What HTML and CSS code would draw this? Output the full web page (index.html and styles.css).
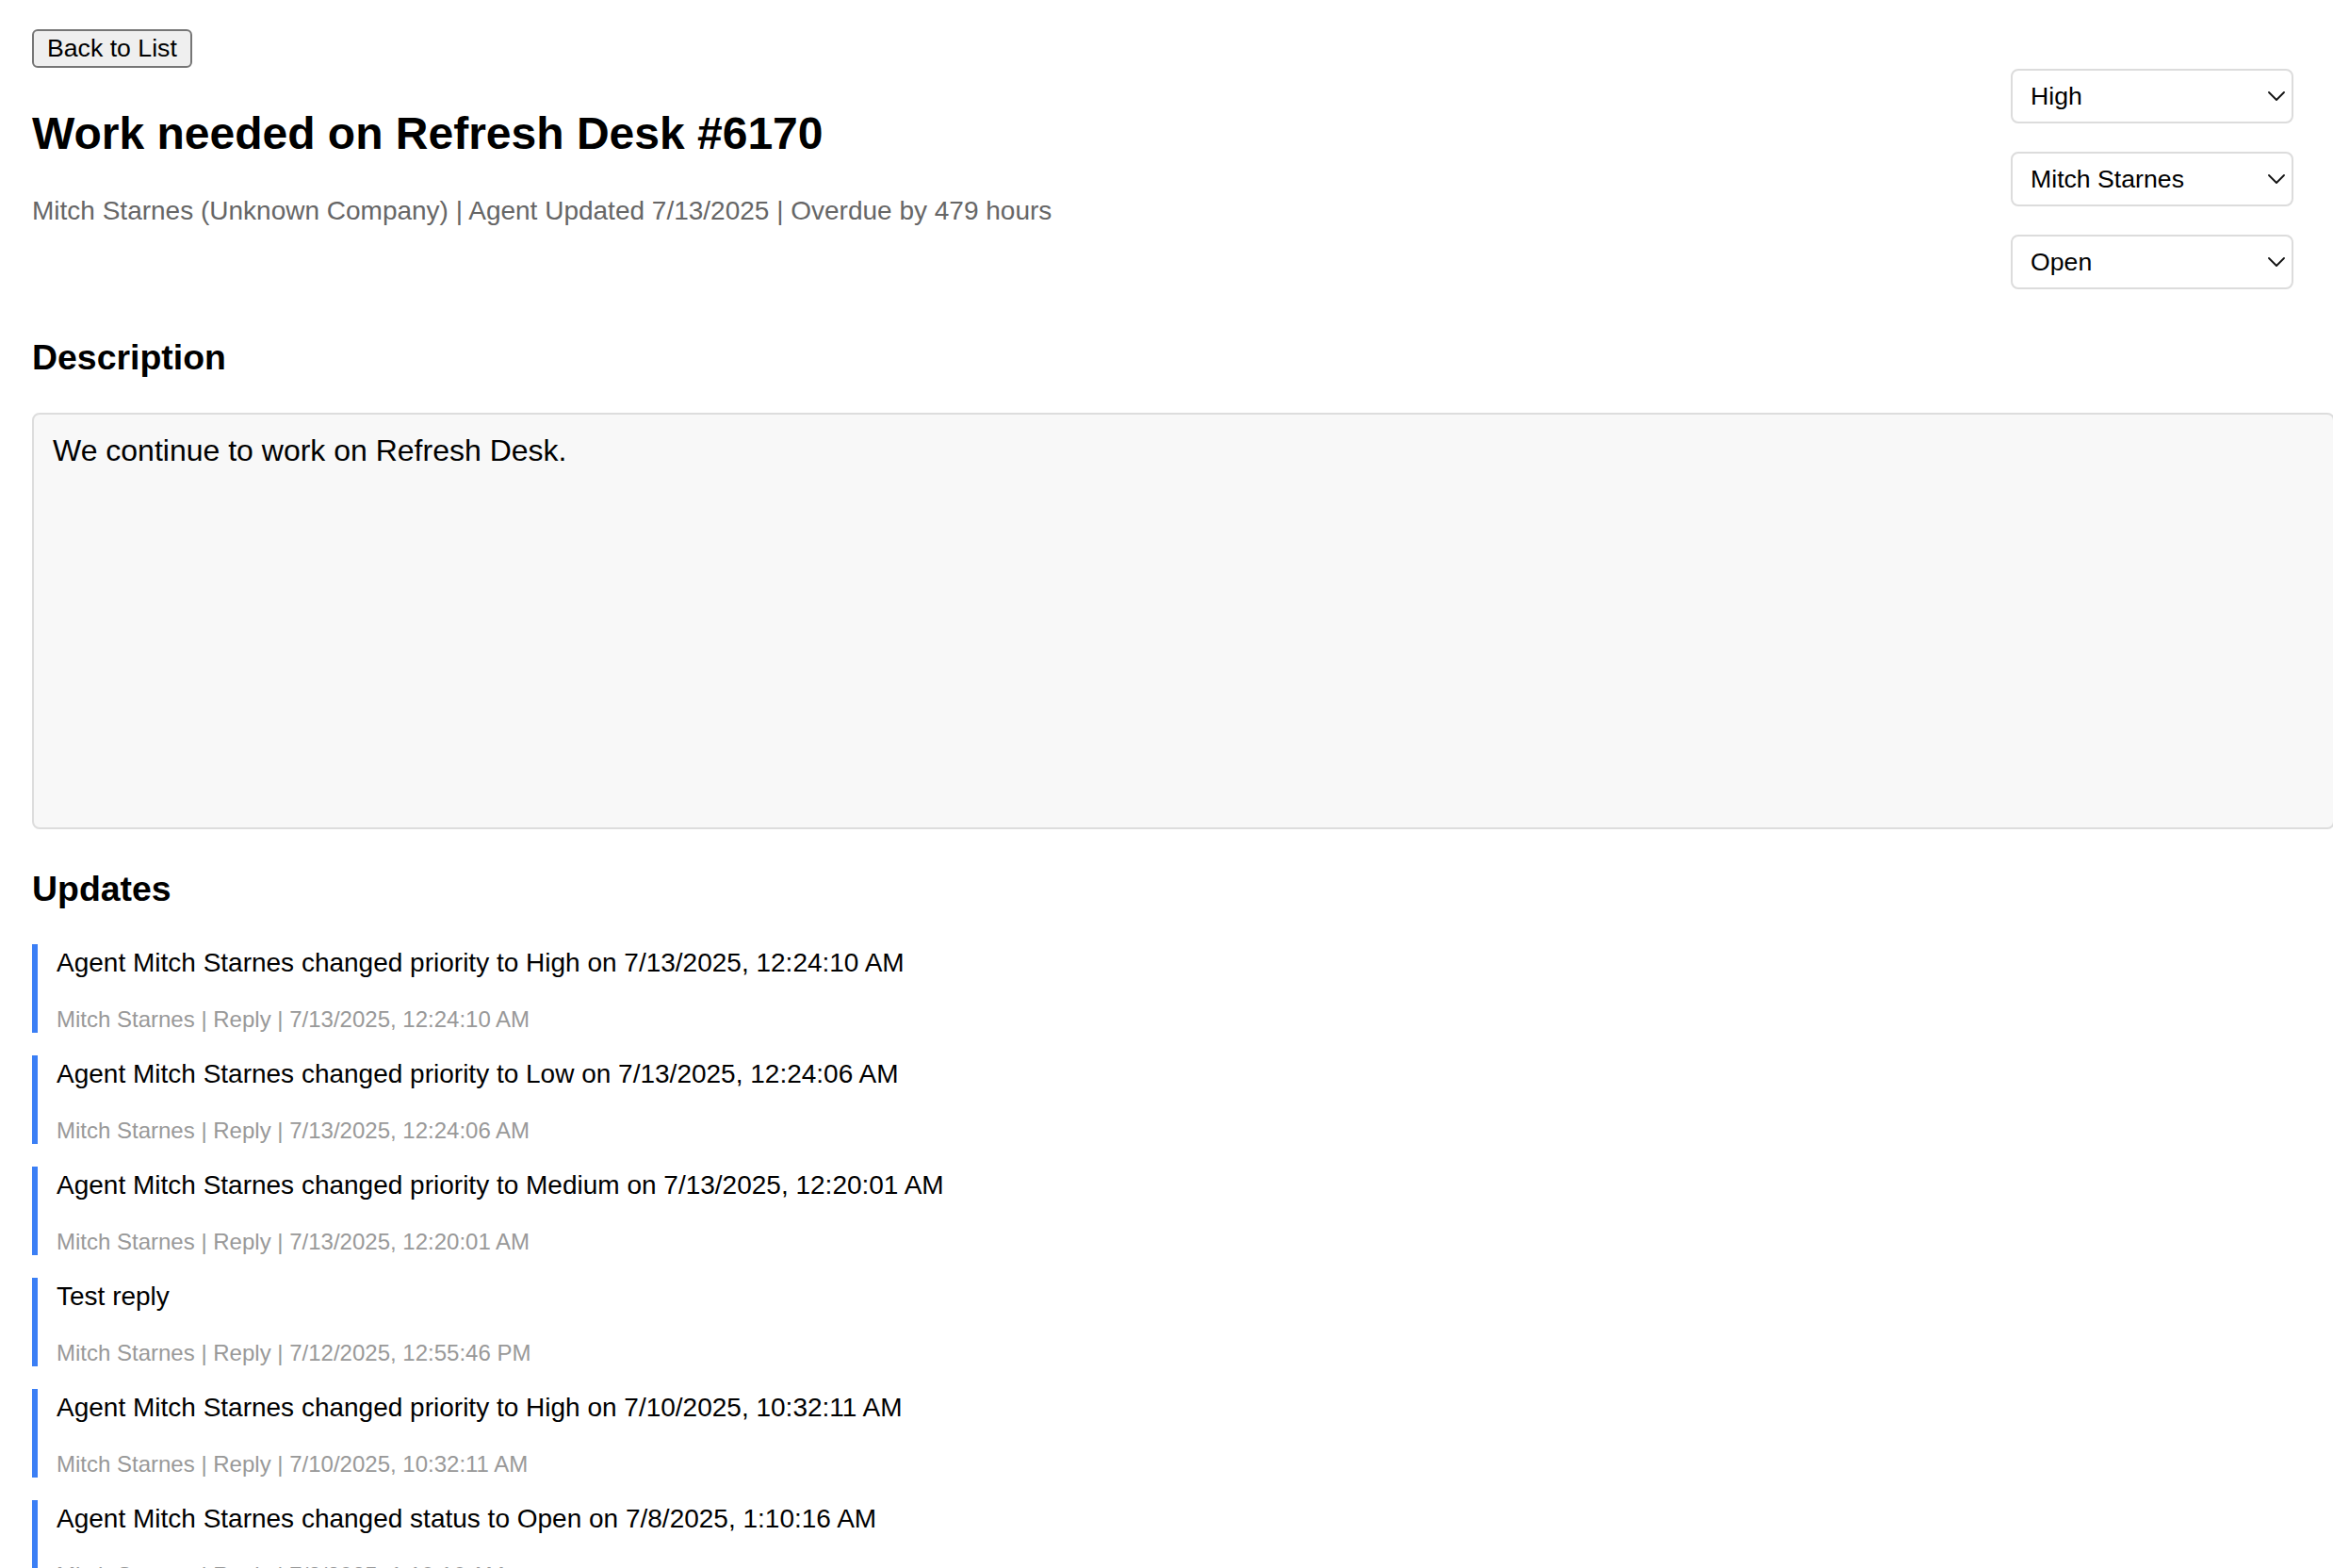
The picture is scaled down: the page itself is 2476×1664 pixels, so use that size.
FILE: index.html
```html
<!DOCTYPE html>
<html lang="en">
<head>
<meta charset="utf-8">
<title>Work needed on Refresh Desk #6170</title>
<link rel="stylesheet" href="styles.css">
</head>
<body>
<div class="page">
  <div class="toolbar">
    <button class="back-btn" type="button">Back to List</button>
  </div>

  <header class="ticket-header">
    <div class="ticket-info">
      <h1 class="ticket-title">Work needed on Refresh Desk #6170</h1>
      <p class="ticket-meta">Mitch Starnes (Unknown Company) | Agent Updated 7/13/2025 | Overdue by 479 hours</p>
    </div>
    <div class="ticket-controls">
      <div class="select-wrap">
        <select class="control-select" aria-label="Priority">
          <option>Low</option>
          <option>Medium</option>
          <option selected>High</option>
          <option>Urgent</option>
        </select>
        <svg class="chevron" viewBox="0 0 18 10" aria-hidden="true"><polyline points="1,1 9,9 17,1" fill="none" stroke="#111" stroke-width="1.8" stroke-linecap="round" stroke-linejoin="round"/></svg>
      </div>
      <div class="select-wrap">
        <select class="control-select" aria-label="Agent">
          <option selected>Mitch Starnes</option>
          <option>Unassigned</option>
        </select>
        <svg class="chevron" viewBox="0 0 18 10" aria-hidden="true"><polyline points="1,1 9,9 17,1" fill="none" stroke="#111" stroke-width="1.8" stroke-linecap="round" stroke-linejoin="round"/></svg>
      </div>
      <div class="select-wrap">
        <select class="control-select" aria-label="Status">
          <option selected>Open</option>
          <option>Pending</option>
          <option>Resolved</option>
          <option>Closed</option>
        </select>
        <svg class="chevron" viewBox="0 0 18 10" aria-hidden="true"><polyline points="1,1 9,9 17,1" fill="none" stroke="#111" stroke-width="1.8" stroke-linecap="round" stroke-linejoin="round"/></svg>
      </div>
    </div>
  </header>

  <section class="description">
    <h3 class="section-title desc-title">Description</h3>
    <div class="description-box">We continue to work on Refresh Desk.</div>
  </section>

  <section class="updates-section">
    <h3 class="section-title updates-title">Updates</h3>
    <ul class="updates">
      <li class="update">
        <p class="update-text">Agent Mitch Starnes changed priority to High on 7/13/2025, 12:24:10 AM</p>
        <p class="update-meta">Mitch Starnes | Reply | 7/13/2025, 12:24:10 AM</p>
      </li>
      <li class="update">
        <p class="update-text">Agent Mitch Starnes changed priority to Low on 7/13/2025, 12:24:06 AM</p>
        <p class="update-meta">Mitch Starnes | Reply | 7/13/2025, 12:24:06 AM</p>
      </li>
      <li class="update">
        <p class="update-text">Agent Mitch Starnes changed priority to Medium on 7/13/2025, 12:20:01 AM</p>
        <p class="update-meta">Mitch Starnes | Reply | 7/13/2025, 12:20:01 AM</p>
      </li>
      <li class="update">
        <p class="update-text">Test reply</p>
        <p class="update-meta">Mitch Starnes | Reply | 7/12/2025, 12:55:46 PM</p>
      </li>
      <li class="update">
        <p class="update-text">Agent Mitch Starnes changed priority to High on 7/10/2025, 10:32:11 AM</p>
        <p class="update-meta">Mitch Starnes | Reply | 7/10/2025, 10:32:11 AM</p>
      </li>
      <li class="update">
        <p class="update-text">Agent Mitch Starnes changed status to Open on 7/8/2025, 1:10:16 AM</p>
        <p class="update-meta">Mitch Starnes | Reply | 7/8/2025, 1:10:16 AM</p>
      </li>
    </ul>
  </section>
</div>
</body>
</html>
```

FILE: styles.css
```css
html,
body {
  margin: 0;
  padding: 0;
  background: #fff;
}

body {
  font-family: "Liberation Sans", Arial, Helvetica, sans-serif;
  font-size: 32px;
  color: #000;
  overflow-x: hidden;
}

.page {
  padding: 31px 42px 0 34px;
}

.toolbar {
  display: flex;
}

.back-btn {
  font-family: inherit;
  font-size: 26.67px;
  line-height: normal;
  padding: 3px 14px;
  border: 2px solid #767676;
  border-radius: 6px;
  background: #efefef;
  color: #000;
}

.ticket-header {
  display: flex;
  justify-content: space-between;
  align-items: flex-start;
  margin-top: 1px;
}

.ticket-title {
  font-size: 48px;
  font-weight: bold;
  line-height: normal;
  margin: 40.5px 0 39px;
}

.ticket-meta {
  font-size: 28px;
  line-height: normal;
  color: #666;
  margin: 0;
}

.ticket-controls {
  display: flex;
  flex-direction: column;
  gap: 30px;
  width: 300px;
  flex-shrink: 0;
}

.select-wrap {
  position: relative;
}

.control-select {
  appearance: none;
  -webkit-appearance: none;
  display: block;
  width: 300px;
  height: 58px;
  box-sizing: border-box;
  padding: 0 40px 0 19px;
  font-family: inherit;
  font-size: 26.67px;
  color: #000;
  background: #fff;
  border: 2px solid #dcdcdc;
  border-radius: 8px;
}

.chevron {
  position: absolute;
  right: 9px;
  top: 50%;
  width: 18px;
  height: 10px;
  margin-top: -5px;
  pointer-events: none;
}

.section-title {
  font-size: 37.44px;
  font-weight: bold;
  line-height: normal;
  margin: 0;
}

.desc-title {
  margin: 51px 0 37px;
}

.description-box {
  width: 100%;
  min-height: 398px;
  padding: 20px;
  border: 2px solid #dddddd;
  border-radius: 8px;
  background: #f8f8f8;
  font-size: 32px;
  line-height: normal;
}

.updates-title {
  margin: 42px 0 37px;
}

.updates {
  list-style: none;
  margin: 0;
  padding: 0;
}

.update {
  border-left: 6px solid #3b7ff5;
  padding: 4px 0 0 20px;
  margin-bottom: 24px;
}

.update-text {
  margin: 0 0 30px;
  font-size: 28px;
  line-height: normal;
}

.update-meta {
  margin: 0;
  font-size: 24px;
  line-height: normal;
  color: #999;
}
```
